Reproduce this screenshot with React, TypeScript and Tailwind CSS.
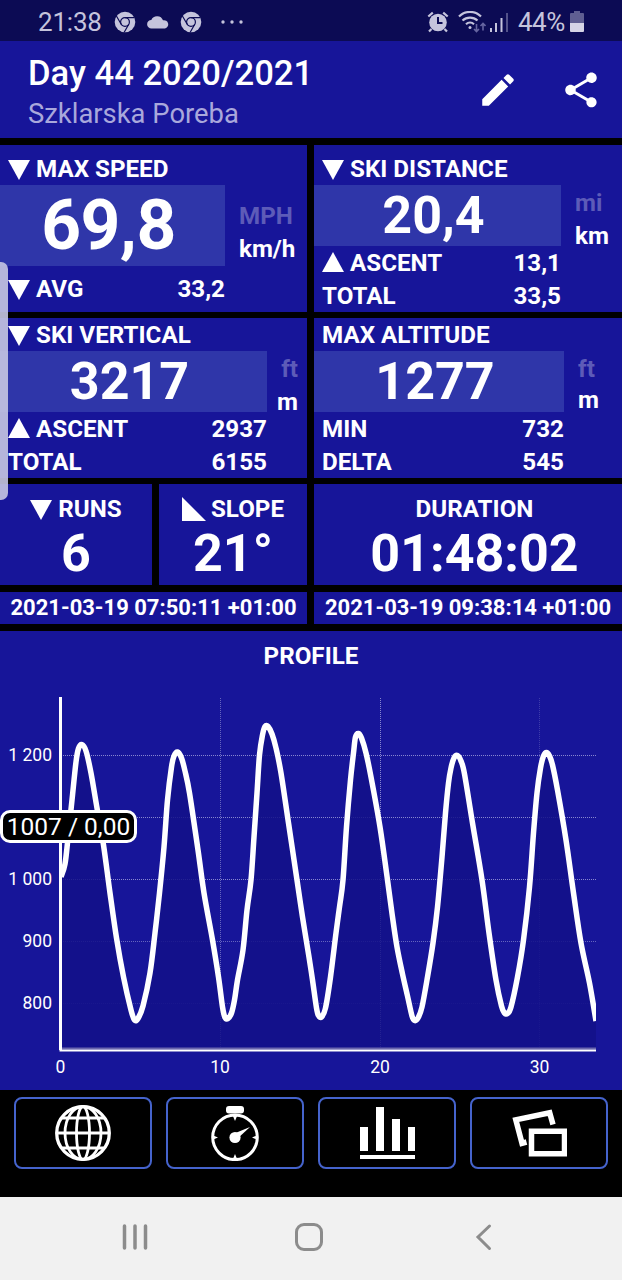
import type { ReactNode } from "react";

// Altitude line, in page pixels
const profile: [number, number][] = [
    [61, 877], [65, 864], [68, 838], [72, 800], [76, 762], [78.5, 748.5], [82, 744.5], [86, 751], [91, 773],
    [97, 808], [103.5, 845], [110, 893], [116.5, 938], [123.5, 977], [131, 1010], [134.5, 1020], [138, 1018.5],
    [143, 1006], [150, 973], [155, 933], [159.5, 893], [164, 847], [167.5, 800], [171.5, 767], [174, 756],
    [177.5, 752], [181.5, 758], [185, 771], [189.5, 793], [198, 850], [204, 893], [212.5, 940], [218.5, 977],
    [222.5, 1007], [225, 1017.5], [228, 1018.5], [231.5, 1013], [234.5, 1000], [237.5, 980], [243, 950],
    [247, 910], [251, 880], [254, 837], [257, 793], [259.5, 755], [262.5, 735], [265, 726.5], [268, 726.5],
    [272, 734], [276, 748], [281, 773], [288.5, 823], [297, 880], [302.5, 917], [309, 957], [312.5, 980],
    [316.5, 1008], [318.5, 1015.5], [321.5, 1017], [325.5, 1008], [330.5, 977], [336, 933], [339.5, 907],
    [343, 880], [346.5, 827], [350.5, 780], [353.5, 753], [355.5, 737], [358.5, 733.5], [361.5, 738],
    [366, 753], [371, 777], [380, 827], [387.5, 880], [392.5, 917], [397, 947], [402.5, 974], [407.5, 996],
    [412, 1016], [414.5, 1020.5], [418, 1018], [422, 1007], [427.5, 977], [433, 943], [437.5, 907], [442, 857],
    [445.5, 813], [448.5, 783], [451, 768], [454, 758], [457.5, 755.5], [461, 761], [464.5, 774], [472.5, 823],
    [482, 880], [489, 933], [496, 980], [501.5, 1006], [504.5, 1013], [507.5, 1013.5], [511, 1007],
    [517.5, 977], [523.5, 940], [529.5, 887], [533.5, 833], [537, 793], [540.5, 768], [543.5, 756],
    [546.5, 752.5], [549.5, 756], [552.5, 765], [557.5, 790], [566, 840], [573.5, 893], [581, 943],
    [589.5, 983], [596, 1021],
];

function smooth(points: [number, number][]) {
    let d = `M${points[0][0]} ${points[0][1]}`;
    for (let i = 0; i < points.length - 1; i++) {
        const a = points[i - 1] ?? points[i];
        const b = points[i];
        const c = points[i + 1];
        const e = points[i + 2] ?? c;
        d += ` C${b[0] + (c[0] - a[0]) / 6} ${b[1] + (c[1] - a[1]) / 6} ${c[0] - (e[0] - b[0]) / 6} ${c[1] - (e[1] - b[1]) / 6} ${c[0]} ${c[1]}`;
    }
    return d;
}

const line = smooth(profile);

function Down() {
    return (
        <svg className="mr-[6px] h-5 w-[22px] shrink-0" viewBox="0 0 22 20" fill="#fff">
            <path d="M0 0h22L11 20z" />
        </svg>
    );
}

function Up() {
    return (
        <svg className="mr-[6px] mb-[3px] h-5 w-[22px] shrink-0" viewBox="0 0 22 20" fill="#fff">
            <path d="M0 20h22L11 0z" />
        </svg>
    );
}

function Chrome() {
    return (
        <svg className="h-[22px] w-[22px]" viewBox="0 0 22 22">
            <circle cx="11" cy="11" r="10.3" fill="#c5c4dc" />
            <g fill="none" stroke="#0c0b54" strokeWidth="1.2">
                <circle cx="11" cy="11" r="4.4" />
                <path d="M11 6.6h9.5M7.2 13.2 2.4 5M14.8 13.2 10.2 21.3" />
            </g>
        </svg>
    );
}

function Label({ children }: { children: ReactNode }) {
    return <div className="flex h-[33px] items-center pt-[2px] pl-[8px]">{children}</div>;
}

function Row({ icon, name, value, width }: { icon?: ReactNode; name: string; value: string; width: string }) {
    return (
        <div className={`flex h-[33px] items-center pt-[2px] pl-[8px] ${width}`}>
            {icon}
            <span className="flex-1">{name}</span>
            <span>{value}</span>
        </div>
    );
}

function Units({ off, on, className }: { off: string; on: string; className: string }) {
    return (
        <div className={`flex flex-col ${className}`}>
            <span className="text-[#5d5bb8]">{off}</span>
            <span>{on}</span>
        </div>
    );
}

function Tool({ children }: { children: ReactNode }) {
    return (
        <button className="flex h-[72px] flex-1 justify-center rounded-[8px] border-2 border-[#4563cc]">
            {children}
        </button>
    );
}

export default function App() {
    return (
        <div className="relative flex h-[1280px] w-[622px] flex-col overflow-hidden bg-black font-['Roboto',sans-serif] text-[24.2px] leading-[33px] font-bold text-white">

            {/* Status bar */}
            <div className="flex h-[41px] items-center bg-[#0c0b54] pt-[3px] pl-[38px] text-[26px] font-normal text-[#c5c4dc]">
                <span className="w-[76px] tracking-[-0.2px]">21:38</span>
                <Chrome />
                <svg className="mx-[11px] h-[14px] w-[22px]" viewBox="0 0 22 14" fill="#c5c4dc">
                    <path d="M4.500 13.500a4.300 4.300 0 0 1-.2-8.600A6.300 6.300 0 0 1 16 5.300 4.200 4.200 0 0 1 18 13.500z" />
                </svg>
                <Chrome />
                <svg className="ml-[19px] h-[4px] w-[22px]" viewBox="0 0 22 4" fill="#c5c4dc">
                    <circle cx="2" cy="2" r="1.7" />
                    <circle cx="11" cy="2" r="1.7" />
                    <circle cx="20" cy="2" r="1.7" />
                </svg>

                {/* Alarm, wifi, signal, battery */}
                <svg className="ml-[184px] h-[22px] w-[22px]" viewBox="0 0 22 22">
                    <circle cx="11" cy="11.5" r="8.8" fill="#c5c4dc" />
                    <path d="M1.3 5.5 5.8 1.6M20.7 5.5l-4.5-3.9M4.5 18l-2.500 2.600M17.500 18l2.500 2.600" stroke="#c5c4dc" strokeWidth="2.200" />
                    <path d="M11 6v6h4.500" fill="none" stroke="#0c0b54" strokeWidth="2" />
                </svg>
                <svg className="ml-[9px] h-[22px] w-[28px]" viewBox="0 0 28 22" fill="none" stroke="#c5c4dc" strokeWidth="2.200">
                    <path d="M1 5.500a15.500 15.500 0 0 1 22 0M4.500 9.500a11 11 0 0 1 15 0M8 13.200a6 6 0 0 1 8 0" />
                    <circle cx="12" cy="16.500" r="1.500" fill="#c5c4dc" stroke="none" />
                    <path d="M18.500 13v7M16 18l2.500 2.500L21 18M25 19.500v-7M22.500 15l2.500-2.500 2.500 2.500" stroke="#6665a0" strokeWidth="1.600" />
                </svg>
                <svg className="ml-[4px] h-[22px] w-[19px]" viewBox="0 0 19 22" fill="#c5c4dc">
                    <path d="M0 17h2v4H0zM5 12h2v9H5zM10.500 7h2v14h-2z" />
                    <path d="M16 2h2v19h-2z" fill="#53528a" />
                </svg>
                <span className="ml-[9px] w-[52px] tracking-[-0.5px]">44%</span>
                <svg className="h-[22px] w-[14px]" viewBox="0 0 14 22">
                    <path d="M4 0h6v2h3q1 0 1 1v10H0V3q0-1 1-1h3z" fill="#5f5e92" />
                    <path d="M0 12h14v8q0 1-1 1H1q-1 0-1-1z" fill="#d5d4e6" />
                </svg>
            </div>

            {/* Header */}
            <div className="flex h-[97px] items-center bg-[#171599] pr-5 pl-[28px]">
                <div className="flex-1 pt-[7px]">
                    <h1 className="text-[34.6px] leading-[42px] font-medium whitespace-nowrap">Day 44 2020/2021</h1>
                    <p className="text-[27.400px] leading-[41px] font-normal text-[#a9a8dc]">Szklarska Poreba</p>
                </div>
                <svg className="h-[42px] w-[42px]" viewBox="0 0 24 24" fill="#fff">
                    <path d="M3 17.250V21h3.750L17.810 9.940l-3.750-3.750L3 17.250zM20.710 7.040c.39-.39.39-1.020 0-1.410l-2.340-2.340c-.39-.39-1.020-.39-1.410 0l-1.830 1.830 3.750 3.750 1.830-1.830z" />
                </svg>
                <svg className="ml-[41px] h-[42px] w-[42px]" viewBox="0 0 24 24" fill="#fff">
                    <path d="M18 16.080c-.76 0-1.440.3-1.960.77L8.910 12.700c.05-.23.09-.46.09-.7s-.04-.47-.09-.7l7.050-4.110c.54.5 1.250.81 2.040.81 1.660 0 3-1.340 3-3s-1.340-3-3-3-3 1.340-3 3c0 .24.04.47.09.7L8.040 9.810C7.500 9.310 6.790 9 6 9c-1.660 0-3 1.340-3 3s1.340 3 3 3c.79 0 1.500-.31 2.040-.81l7.120 4.160c-.05.21-.08.43-.08.65 0 1.610 1.310 2.920 2.920 2.920 1.610 0 2.920-1.310 2.920-2.920s-1.310-2.920-2.920-2.920z" />
                </svg>
            </div>

            {/* Speed / distance */}
            <div className="mt-[7px] grid h-[166px] grid-cols-[307px_308px] gap-[7px]">
                <div className="bg-[#171599] pt-[7px]">
                    <Label><Down />MAX SPEED</Label>
                    <div className="flex">
                        <div className="flex h-[81px] w-[225px] items-center justify-center bg-[#2f36a9] pr-[8px] text-[69.500px] tracking-[-0.5px]">69,8</div>
                        <Units off="MPH" on="km/h" className="pt-[15px] pl-[14px]" />
                    </div>
                    <div className="pt-[6px]">
                        <Row icon={<Down />} name="AVG" value="33,2" width="w-[225px]" />
                    </div>
                </div>
                <div className="bg-[#171599] pt-[7px]">
                    <Label><Down />SKI DISTANCE</Label>
                    <div className="flex h-[61px]">
                        <div className="flex w-[247px] items-center justify-center bg-[#2f36a9] pr-[8px] text-[52px]">20,4</div>
                        <Units off="mi" on="km" className="pt-[2px] pl-[14px]" />
                    </div>
                    <Row icon={<Up />} name="ASCENT" value="13,1" width="w-[247px]" />
                    <Row name="TOTAL" value="33,5" width="w-[247px]" />
                </div>
            </div>

            {/* Vertical / altitude */}
            <div className="mt-[7px] grid h-[159px] grid-cols-[307px_308px] gap-[7px]">
                <div className="bg-[#171599]">
                    <Label><Down />SKI VERTICAL</Label>
                    <div className="flex h-[61px]">
                        <div className="flex w-[267px] items-center justify-center bg-[#2f36a9] pr-[8px] text-[52px]">3217</div>
                        <Units off="ft" on="m" className="w-[31px] items-end pt-[2px]" />
                    </div>
                    <Row icon={<Up />} name="ASCENT" value="2937" width="w-[267px]" />
                    <Row name="TOTAL" value="6155" width="w-[267px]" />
                </div>
                <div className="bg-[#171599]">
                    <Label>MAX ALTITUDE</Label>
                    <div className="flex h-[61px]">
                        <div className="flex w-[250px] items-center justify-center bg-[#2f36a9] pr-[8px] text-[52px]">1277</div>
                        <Units off="ft" on="m" className="pt-[3px] pl-[14px] leading-[31px]" />
                    </div>
                    <Row name="MIN" value="732" width="w-[250px]" />
                    <Row name="DELTA" value="545" width="w-[250px]" />
                </div>
            </div>

            {/* Runs / slope / duration */}
            <div className="mt-[7px] grid h-[101px] grid-cols-[152px_148px_308px] gap-[7px] text-center">
                <div className="bg-[#171599] pt-[9px]">
                    <div className="flex items-center justify-center"><Down />RUNS</div>
                    <div className="pt-[3px] text-[52px] leading-[50px]">6</div>
                </div>
                <div className="bg-[#171599] pt-[9px]">
                    <div className="flex items-center justify-center">
                        <svg className="mr-[5px] mb-[2px] h-6 w-6" viewBox="0 0 24 24" fill="#fff"><path d="M0 0v24h24z" /></svg>
                        SLOPE
                    </div>
                    <div className="pt-[3px] text-[52px] leading-[50px]">21°</div>
                </div>
                <div className="bg-[#171599] pt-[9px] pl-[13px]">
                    <div>DURATION</div>
                    <div className="pt-[3px] text-[52px] leading-[50px]">01:48:02</div>
                </div>
            </div>

            {/* Start / end time */}
            <div className="mt-[7px] grid h-[32px] grid-cols-[307px_308px] gap-[7px] text-center text-[22px] leading-8">
                <div className="bg-[#171599]">2021-03-19 07:50:11 +01:00</div>
                <div className="bg-[#171599]">2021-03-19 09:38:14 +01:00</div>
            </div>

            {/* Profile chart */}
            <div className="relative mt-[7px] h-[459px] bg-[#171599]">
                <h2 className="h-[49px] pt-[9px] text-center">PROFILE</h2>
                <svg className="block h-[410px] w-[622px]" viewBox="0 680 622 410">
                    <clipPath id="plot">
                        <path d="M61 690h535v360H61z" />
                    </clipPath>
                    <g stroke="#8887cf" strokeWidth="1" strokeDasharray="1 1">
                        <path d="M61 755.500h535M61 817.500h535M61 879.500h535M380.500 698v352" />
                        <path d="M61 941.500h535M220.500 698v352" opacity=".7" />
                        <path d="M61 1003.500h535M539.500 698v352" opacity=".35" />
                    </g>
                    <path d={`${line} V1050 H61 Z`} fill="#131188" fillOpacity=".85" />
                    <path d="M61 1048.500h535" stroke="#6a67ae" strokeWidth="2" />
                    <path d="M59.500 1050.500h536.500" stroke="#fff" strokeWidth="2" />
                    <path d="M60.500 697v353" stroke="#fff" strokeWidth="3" />
                    <path d={line} clipPath="url(#plot)" fill="none" stroke="#fff" strokeWidth="5.500" strokeLinejoin="round" />
                    <g className="text-[17.500px] font-normal" fill="#fff" textAnchor="end">
                        <text x="52" y="761">1 200</text>
                        <text x="52" y="885">1 000</text>
                        <text x="52" y="947">900</text>
                        <text x="52" y="1009">800</text>
                    </g>
                    <g className="text-[17.500px] font-normal" fill="#fff" textAnchor="middle">
                        <text x="60.500" y="1073">0</text>
                        <text x="220" y="1073">10</text>
                        <text x="380" y="1073">20</text>
                        <text x="539.500" y="1073">30</text>
                    </g>
                </svg>
                <div className="absolute top-[179px] left-0 flex h-[33px] w-[137px] items-center justify-center rounded-[10px] border-[3px] border-white bg-black text-[24.500px] font-normal whitespace-nowrap">
                    1007 / 0,00
                </div>
            </div>

            {/* Toolbar */}
            <div className="flex h-[107px] gap-[14px] px-[14px] pt-[7px]">
                <Tool>
                    <svg className="mt-[6px] h-[56px] w-[56px]" viewBox="0 0 56 56" fill="none" stroke="#fff" strokeWidth="2.800">
                        <circle cx="28" cy="28" r="26.300" strokeWidth="3.300" />
                        <ellipse cx="28" cy="28" rx="18" ry="26.500" />
                        <ellipse cx="28" cy="28" rx="6.500" ry="26.500" />
                        <path d="M1 28h54M6 13h44M6 43h44" />
                    </svg>
                </Tool>
                <Tool>
                    <svg className="mt-[6px] h-[56px] w-[56px]" viewBox="0 0 56 56" fill="#fff">
                        <rect x="19" y="1" width="18" height="7.500" rx="3" />
                        <circle cx="28" cy="32.300" r="22.300" fill="none" stroke="#fff" strokeWidth="3" />
                        <path d="M25.500 10h5L28 16zM25.500 55h5L28 49zM5 30v5l6-2.500zM51 30v5l-6-2.500z" />
                        <circle cx="28" cy="32.500" r="5.600" />
                        <path d="M26 29 43 22 30 34z" />
                    </svg>
                </Tool>
                <Tool>
                    <svg className="mt-[6px] h-[56px] w-[56px]" viewBox="0 0 56 56" fill="#fff">
                        <path d="M1 22h8v24H1zM17 2h8v44h-8zM33 14h8v32h-8zM49 22h7v24h-7zM1 50h55v4H1z" />
                    </svg>
                </Tool>
                <Tool>
                    <svg className="mt-[6px] h-[56px] w-[56px]" viewBox="0 0 56 56" fill="none" stroke="#fff" strokeWidth="5.500">
                        <path d="M15.500 37 11 38.300 4.800 14.800 38.700 7.800 42 19.500" />
                        <path d="M20.500 26.300h33v22.500H20.500z" />
                    </svg>
                </Tool>
            </div>

            {/* Android navigation */}
            <div className="flex h-[83px] items-center bg-[#f1f1f1] pb-[4px] pl-[122px]">
                <svg className="h-[28px] w-[26px]" viewBox="0 0 26 28" stroke="#8c8c8c" strokeWidth="3.500" strokeLinecap="round">
                    <path d="M2.500 3v22M13 3v22M23.500 3v22" />
                </svg>
                <svg className="ml-[147px] h-[28px] w-[28px]" viewBox="0 0 28 28" fill="none" stroke="#8c8c8c" strokeWidth="3">
                    <rect x="1.500" y="1.500" width="25" height="25" rx="7.500" />
                </svg>
                <svg className="ml-[152px] h-[28px] w-[18px]" viewBox="0 0 18 28" fill="none" stroke="#8c8c8c" strokeWidth="3" strokeLinecap="round">
                    <path d="M14.500 3 3 14l11.500 11.500" />
                </svg>
            </div>

            {/* Edge panel handle */}
            <div className="absolute top-[262px] left-0 h-[238px] w-[8px] rounded-r-[7px] bg-[#c6c6e2]/90" />

        </div>
    );
}
